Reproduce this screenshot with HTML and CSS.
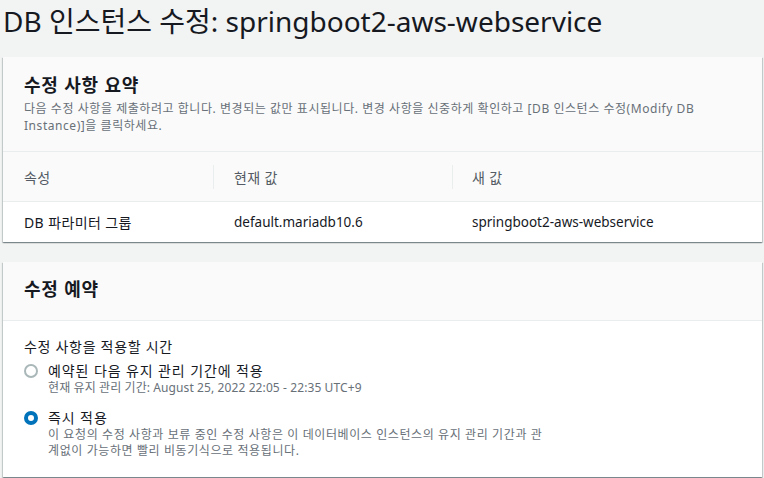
FILE: index.html
```html
<!DOCTYPE html>
<html lang="ko">
<head>
<meta charset="utf-8">
<link rel="stylesheet" href="styles.css">
</head>
<body>
<h1 class="page-title">DB 인스턴스 수정: springboot2-aws-webservice</h1>

<section class="card">
  <div class="card-header">
    <h2 class="card-title">수정 사항 요약</h2>
    <p class="card-desc">다음 수정 사항을 제출하려고 합니다. 변경되는 값만 표시됩니다. 변경 사항을 신중하게 확인하고 [DB 인스턴스 수정(Modify DB<br>Instance)]을 클릭하세요.</p>
  </div>
  <div class="table">
    <div class="row head">
      <div class="cell c1">속성</div>
      <div class="cell c2"><span class="sep"></span>현재 값</div>
      <div class="cell c3"><span class="sep"></span>새 값</div>
    </div>
    <div class="row body">
      <div class="cell c1 ko">DB 파라미터 그룹</div>
      <div class="cell c2 en">default.mariadb10.6</div>
      <div class="cell c3 en">springboot2-aws-webservice</div>
    </div>
  </div>
</section>

<section class="card card2">
  <div class="card-header header2">
    <h2 class="card-title">수정 예약</h2>
  </div>
  <div class="card-body">
    <div class="field-label">수정 사항을 적용할 시간</div>
    <div class="radio-item">
      <span class="radio"></span>
      <div class="radio-text">
        <div class="radio-label">예약된 다음 유지 관리 기간에 적용</div>
        <div class="radio-desc mixed">현재 유지 관리 기간: August 25, 2022 22:05 - 22:35 UTC+9</div>
      </div>
    </div>
    <div class="radio-item">
      <span class="radio checked"></span>
      <div class="radio-text">
        <div class="radio-label">즉시 적용</div>
        <div class="radio-desc">이 요청의 수정 사항과 보류 중인 수정 사항은 이 데이터베이스 인스턴스의 유지 관리 기간과 관<br>계없이 가능하면 빨리 비동기식으로 적용됩니다.</div>
      </div>
    </div>
  </div>
</section>
</body>
</html>
```
FILE: styles.css
```css
html, body {
  margin: 0;
  padding: 0;
}
body {
  background: #f2f3f3;
  font-family: "Noto Sans", "Noto Sans CJK KR", sans-serif;
  color: #16191f;
  width: 764px;
  height: 478px;
  overflow: hidden;
}
.page-title {
  margin: 0;
  padding: 2px 0 0 3px;
  height: 54px;
  box-sizing: border-box;
  font-size: 28px;
  font-weight: 400;
  line-height: 38px;
  color: #16191f;
  white-space: nowrap;
}
.card {
  margin: 3px 2px 0 3px;
  background: #fff;
  box-shadow: 0 1px 1px 0 rgba(0,28,36,.3), 1px 1px 1px 0 rgba(0,28,36,.15), -1px 1px 1px 0 rgba(0,28,36,.15);
}
.card2 {
  margin-top: 20px;
}
.card-header {
  background: #fafafa;
  padding: 16px 20px 0 21px;
  height: 95px;
  box-sizing: border-box;
  border-bottom: 1px solid #eaeded;
}
.header2 {
  height: 59px;
  padding-top: 15px;
}
.card-title {
  margin: 0;
  font-size: 18px;
  font-weight: 700;
  line-height: 24px;
  letter-spacing: 0.8px;
}
.card-desc {
  margin: 3px 0 0;
  font-size: 12px;
  line-height: 17px;
  color: #687078;
  letter-spacing: 0.55px;
}
.row {
  display: flex;
}
.row.head {
  background: #fafafa;
  height: 49px;
  border-bottom: 1px solid #eaeded;
  color: #545b64;
}
.row.body {
  height: 40px;
}
.cell {
  position: relative;
  display: flex;
  align-items: center;
  font-size: 14px;
  box-sizing: border-box;
  letter-spacing: 0.4px;
}
.cell.en {
  font-size: 13.5px;
  letter-spacing: 0;
}
.c1 { width: 210px; padding-left: 21px; }
.c2 { width: 239px; padding-left: 21px; }
.c3 { flex: 1; padding-left: 20px; }
.sep {
  position: absolute;
  left: 0;
  top: 13px;
  bottom: 12px;
  width: 1px;
  background: #eaeded;
}
.card-body {
  padding: 16px 20px 18px 21px;
}
.field-label {
  font-size: 14px;
  line-height: 20px;
  margin-bottom: 4px;
  letter-spacing: 0.7px;
}
.radio-item {
  display: flex;
  gap: 10px;
  margin-bottom: 12px;
}
.radio-item:last-child {
  margin-bottom: 0;
}
.radio {
  flex: none;
  width: 14px;
  height: 14px;
  border: 2px solid #aab7b8;
  border-radius: 50%;
  box-sizing: border-box;
  margin-top: 3px;
  background: #fff;
}
.radio.checked {
  border: 4px solid #0073bb;
}
.radio-label {
  font-size: 14px;
  line-height: 19px;
  letter-spacing: 0.9px;
}
.radio-desc {
  font-size: 12px;
  line-height: 16px;
  color: #687078;
  letter-spacing: 0.6px;
}
.radio-desc.mixed {
  letter-spacing: 0.1px;
}
```
